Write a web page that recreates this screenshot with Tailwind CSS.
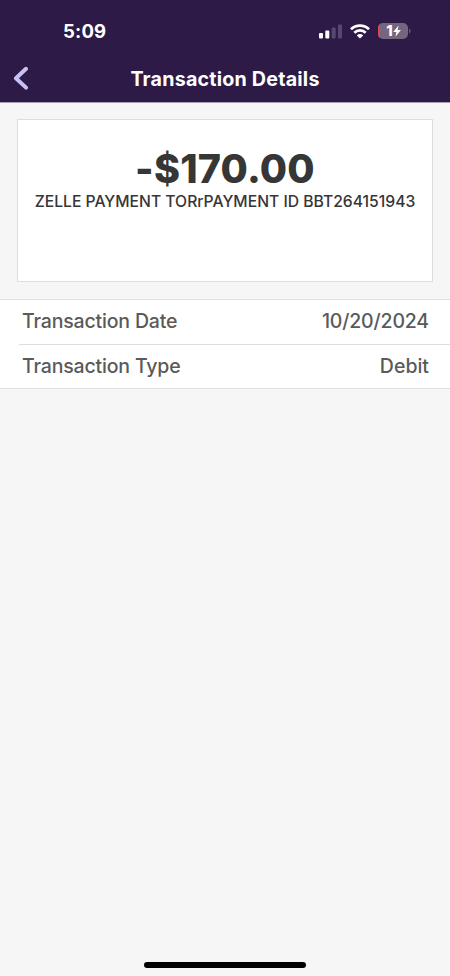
<!DOCTYPE html>
<html lang="en">
<head>
<meta charset="utf-8">
<meta name="viewport" content="width=device-width, initial-scale=1">
<title>Transaction Details</title>
<script src="https://cdn.jsdelivr.net/npm/@tailwindcss/browser@4"></script>
</head>
<body class="bg-[#f6f6f6] font-['Inter',sans-serif]">
<div class="flex h-[976px] w-[450px] flex-col overflow-hidden">
  <header class="h-[103px] shrink-0 border-b border-[#a99cb5] bg-[#2e1a47] text-white">
    <div class="flex h-[54px] items-center justify-between pt-2 pr-[39px] pl-[63px]">
      <span class="pb-px text-[18.5px] leading-6 font-bold tracking-[0.2px]">5:09</span>
      <div class="flex items-center gap-2">
        <svg class="h-[15px] w-[23px]" viewBox="0 0 23 15">
          <rect x="0" y="9" width="4" height="5.5" rx="1" fill="#fff"/>
          <rect x="6.3" y="6.5" width="4" height="8" rx="1" fill="#fff"/>
          <rect x="12.7" y="3.5" width="4" height="11" rx="1" fill="#574870"/>
          <rect x="19" y="0.5" width="4" height="14" rx="1" fill="#574870"/>
        </svg>
        <svg class="h-[15px] w-5" viewBox="0 0 20 15" fill="none" stroke="#fff" stroke-width="2.7">
          <path d="M1 5.3a12.8 12.8 0 0 1 18 0"/>
          <path d="M4.3 8.8a8.1 8.1 0 0 1 11.4 0"/>
          <path d="M10 14.6 6.8 11.4a4.6 4.6 0 0 1 6.4 0Z" fill="#fff" stroke="none"/>
        </svg>
        <svg class="h-4 w-[33px]" viewBox="0 0 33 16">
          <defs><clipPath id="cell"><rect width="30" height="16" rx="5"/></clipPath></defs>
          <g clip-path="url(#cell)">
            <rect width="30" height="16" fill="#74667f"/>
            <rect width="1.6" height="16" fill="#e5484d"/>
          </g>
          <path d="M31.2 5.5c1.8.7 1.8 4.3 0 5Z" fill="#74667f"/>
          <text x="8.2" y="13.2" font-size="14.5" font-weight="800" fill="#fff">1</text>
          <path d="M20.6 2.6 15.2 9h3.2l-1 4.8L22.9 7h-3.3Z" fill="#fff"/>
        </svg>
      </div>
    </div>
    <div class="grid h-12 grid-cols-[60px_1fr_60px] items-center">
      <svg class="ml-3 h-6 w-[18px]" viewBox="0 0 18 24" fill="none" stroke="#c9c1f5" stroke-width="4" stroke-linecap="round" stroke-linejoin="round"><path d="M14 2.8 4 12.3l10 9.3"/></svg>
      <h1 class="pt-px text-center text-[19.7px] leading-6 font-bold tracking-[0.2px] whitespace-nowrap">Transaction Details</h1>
    </div>
  </header>

  <main>
    <section class="mx-[17px] mt-4 flex h-[163px] flex-col items-center border border-[#dedede] bg-white pt-7 text-[#363636]">
      <p class="text-[39.5px] leading-[42px] font-extrabold tracking-[0.2px]">-$170.00</p>
      <p class="text-[15.7px] leading-6 font-medium whitespace-nowrap">ZELLE PAYMENT TORrPAYMENT ID BBT264151943</p>
    </section>
    <dl class="mt-[17px] border-y border-[#dedede] bg-white text-[19.5px] leading-6 font-medium tracking-[-0.17px] text-[#5a5a5a]">
      <div class="flex h-11 items-center justify-between pr-[21px] pb-0.5 pl-[22px]"><dt>Transaction Date</dt><dd>10/20/2024</dd></div>
      <div class="ml-[19px] flex h-11 items-center justify-between border-t border-[#dedede] pr-[21px] pb-px pl-[3px]"><dt>Transaction Type</dt><dd class="tracking-normal">Debit</dd></div>
    </dl>
  </main>

  <div class="mx-auto mt-auto mb-2 h-[6px] w-[162px] rounded-full bg-black"></div>
</div>
</body>
</html>
